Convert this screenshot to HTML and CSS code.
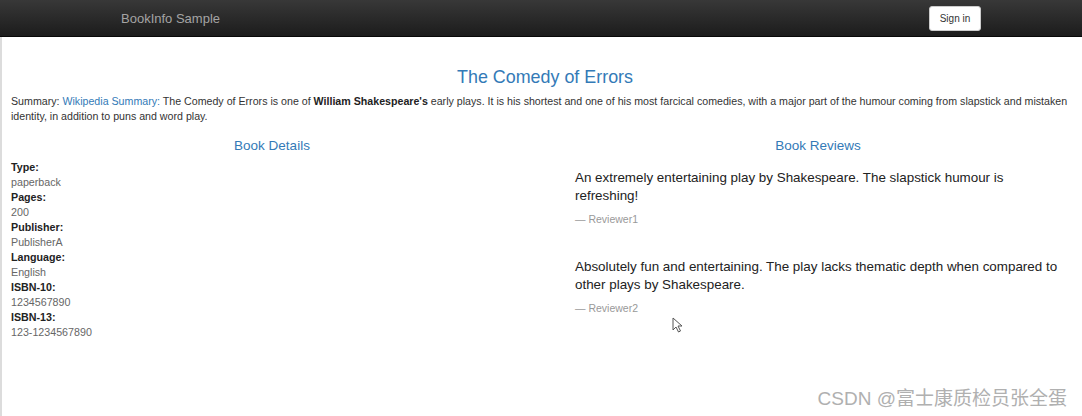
FILE: index.html
```html
<!DOCTYPE html>
<html>
<head>
<meta charset="utf-8">
<link rel="stylesheet" href="styles.css">
</head>
<body>
<nav class="navbar">
  <div class="brand">BookInfo Sample</div>
  <button class="signin">Sign in</button>
</nav>
<main class="page">
  <h3 class="title">The Comedy of Errors</h3>
  <p class="summary">Summary: <a href="#">Wikipedia Summary:</a> The Comedy of Errors is one of <b>William Shakespeare's</b> early plays. It is his shortest and one of his most farcical comedies, with a major part of the humour coming from slapstick and mistaken identity, in addition to puns and word play.</p>
  <div class="cols">
    <section class="details">
      <h4 class="heading">Book Details</h4>
      <dl class="dl">
        <dt>Type:</dt><dd>paperback</dd>
        <dt>Pages:</dt><dd>200</dd>
        <dt>Publisher:</dt><dd>PublisherA</dd>
        <dt>Language:</dt><dd>English</dd>
        <dt>ISBN-10:</dt><dd>1234567890</dd>
        <dt>ISBN-13:</dt><dd>123-1234567890</dd>
      </dl>
    </section>
    <section class="reviews">
      <h4 class="heading">Book Reviews</h4>
      <blockquote class="review">
        <p>An extremely entertaining play by Shakespeare. The slapstick humour is refreshing!</p>
        <small>— Reviewer1</small>
      </blockquote>
      <blockquote class="review">
        <p>Absolutely fun and entertaining. The play lacks thematic depth when compared to other plays by Shakespeare.</p>
        <small>— Reviewer2</small>
      </blockquote>
    </section>
  </div>
  <svg class="cursor" width="12" height="17" viewBox="0 0 12 17"><path d="M1 1 L1 13 L4 10 L6.5 15 L8.5 14 L6 9 L10 9 Z" fill="#fff" stroke="#555" stroke-width="1"/></svg>
  <div class="watermark">CSDN @富士康质检员张全蛋</div>
</main>
</body>
</html>
```
FILE: styles.css
```css
* { box-sizing: border-box; }
html, body { margin: 0; padding: 0; }
body {
  width: 1082px;
  height: 416px;
  overflow: hidden;
  background: #fff;
  font-family: "Liberation Sans", Arial, sans-serif;
  color: #333;
  position: relative;
}
.navbar {
  height: 37px;
  background: linear-gradient(to bottom, #383838 0%, #1c1c1c 100%);
  border-bottom: 1px solid #080808;
  display: flex;
  align-items: center;
  padding: 0 101px 0 121px;
  justify-content: space-between;
}
.brand {
  color: #a4a4a4;
  font-size: 13px;
}
.signin {
  font-family: "Liberation Sans", Arial, sans-serif;
  font-size: 10px;
  color: #333;
  background: #fff;
  border: 1px solid #ccc;
  border-radius: 3px;
  height: 25px;
  width: 52px;
  padding: 0;
}
.page {
  border-left: 2px solid #dcdcdc;
  height: 379px;
  padding: 0 11px 0 9px;
}
.title {
  margin: 0;
  padding-top: 29px;
  font-size: 17.9px;
  font-weight: normal;
  color: #337ab7;
  text-align: center;
  line-height: 22px;
  padding-left: 8px;
}
.summary {
  margin: 6px 0 0;
  font-size: 10.65px;
  line-height: 15px;
  color: #333;
}
.summary a { color: #337ab7; text-decoration: none; }
.summary b { color: #222; }
.cols {
  display: grid;
  grid-template-columns: 522px 1fr;
  column-gap: 31px;
  margin-top: 14px;
}
.heading {
  margin: 0;
  font-size: 13.5px;
  font-weight: normal;
  color: #337ab7;
  text-align: center;
  line-height: 16px;
}
.dl {
  margin: 6px 0 0;
  font-size: 10.7px;
  line-height: 15px;
}
.dl dt { font-weight: bold; color: #222; }
.dl dd { margin: 0; color: #666; }
.reviews { padding: 0 10px 0 11px; }
.review {
  margin: 15px 0 0;
  padding: 0;
}
.review + .review { margin-top: 32px; }
.review p {
  margin: 0;
  font-size: 13.4px;
  line-height: 18px;
  color: #222;
}
.review small {
  display: block;
  margin-top: 7px;
  font-size: 10.5px;
  line-height: 14px;
  color: #999;
}
.cursor {
  position: absolute;
  left: 672px;
  top: 317px;
}
.watermark {
  position: absolute;
  right: 15px;
  bottom: 6px;
  font-family: "Liberation Sans", "Noto Sans CJK SC", sans-serif;
  font-size: 19px;
  color: #b0b0b0;
}
```
